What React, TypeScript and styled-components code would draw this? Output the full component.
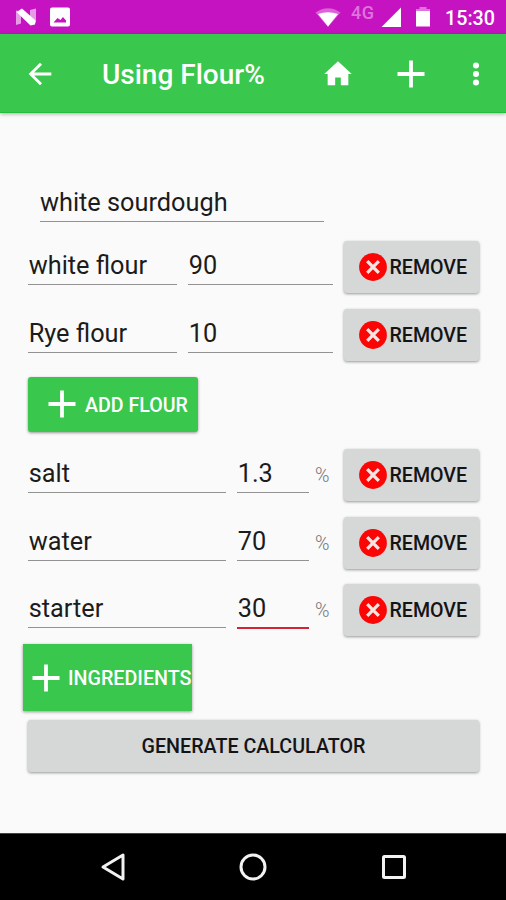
import React from "react";
import styled, { createGlobalStyle } from "styled-components";

const GlobalStyle = createGlobalStyle`
  * { box-sizing: border-box; }
  body { margin: 0; background: #fafafa; }
`;

const Screen = styled.div`
  width: 506px;
  height: 900px;
  display: flex;
  flex-direction: column;
  overflow: hidden;
  background: #fafafa;
  font-family: Roboto, sans-serif;
  color: #1c1c1c;
`;

const StatusBar = styled.div`
  flex: none;
  height: 34px;
  background: #c513c1;
  display: flex;
  align-items: center;
  justify-content: space-between;
  padding: 0 11px 0 15px;
  color: #fff;
`;

const StatusGroup = styled.div<{ $gap: number }>`
  display: flex;
  align-items: center;
  gap: ${(p) => p.$gap}px;
`;

const Network = styled.span`
  font-size: 18px;
  line-height: 18px;
  font-weight: 500;
  color: #df73dc;
  padding-bottom: 9px;
  margin: 0 -2px 0 2px;
  letter-spacing: 0.5px;
  width: 24px;
`;

const Clock = styled.span`
  font-size: 19.7px;
  line-height: 24px;
  font-weight: 500;
  width: 50px;
  padding-top: 3px;
  text-align: right;
  white-space: nowrap;
`;

const AppBar = styled.header`
  flex: none;
  height: 79px;
  background: #3ac74d;
  border-bottom: 1px solid #25bd3e;
  box-shadow: 0 1px 4px rgba(0, 0, 0, 0.32);
  display: flex;
  align-items: center;
  padding: 2px 13px 0 23px;
  color: #fff;
  svg { display: block; flex: none; }
`;

const Title = styled.h1`
  flex: 1;
  margin: 0 0 0 45px;
  font-size: 28px;
  line-height: 34px;
  font-weight: 500;
  padding-top: 2px;
`;

const Actions = styled.div`
  display: flex;
  align-items: center;
`;

const HomeAction = styled.div`
  margin-right: 42px;
`;

const AddAction = styled.div`
  margin-right: 34px;
`;

const Form = styled.main`
  flex: 1;
  display: flex;
  flex-direction: column;
  align-items: flex-start;
  padding: 68px 27px 0 28px;
`;

const Row = styled.div`
  width: 100%;
  height: 67.6px;
  flex: none;
  display: flex;
  align-items: flex-start;
`;

const Field = styled.div<{ $width: number; $gap?: number; $active?: boolean }>`
  flex: none;
  width: ${(p) => p.$width}px;
  margin-right: ${(p) => p.$gap ?? 0}px;
  height: ${(p) => (p.$active ? 53 : 52)}px;
  border-bottom: ${(p) => (p.$active ? "2px solid #d3243c" : "1px solid #929292")};
  padding: 17px 0 0 0.7px;
  font-size: 25.3px;
  line-height: 32px;
  white-space: nowrap;
`;

const NameRow = styled.div`
  flex: none;
  height: 52.4px;
  padding-left: 12px;
`;

const NameField = styled(Field)`
  height: 41px;
  padding: 6px 0 0;
`;

const Unit = styled.span`
  width: 28px;
  flex: none;
  padding-top: 21px;
  font-size: 19.6px;
  line-height: 28px;
  font-weight: 300;
  color: #777;
`;

const Button = styled.button`
  border: 0;
  margin: 0;
  padding: 0;
  flex: none;
  display: flex;
  align-items: center;
  font-family: inherit;
  font-size: 19.7px;
  line-height: 24px;
  font-weight: 500;
  white-space: nowrap;
  border-radius: 3px;
  box-shadow: 0 1px 3px rgba(0, 0, 0, 0.4);
  svg { display: block; flex: none; }
  span { padding-top: 2px; }
`;

const RemoveButton = styled(Button)`
  margin: 8px 0 0 auto;
  width: 135px;
  height: 52px;
  padding-left: 14.5px;
  gap: 3px;
  font-size: 19.6px;
  background: #d6d7d7;
  color: #141414;
`;

const AddFlourButton = styled(Button)`
  width: 170px;
  height: 55px;
  margin: 8px 0 9.7px;
  padding-left: 20px;
  gap: 9px;
  background: #3ac74d;
  color: #fff;
  font-size: 19.6px;
  span { padding-top: 3px; }
`;

const IngredientsButton = styled(Button)`
  width: 169px;
  height: 67px;
  margin: 0 0 9px -5px;
  padding-left: 8.5px;
  gap: 8.5px;
  border-radius: 0;
  background: #3ac74d;
  color: #fff;
  overflow: hidden;
  span { padding-top: 3px; }
`;

const GenerateButton = styled(Button)`
  width: 451px;
  height: 52px;
  justify-content: center;
  background: #d6d7d7;
  color: #141414;
`;

const NavBar = styled.nav`
  flex: none;
  height: 67px;
  border-top: 1px solid #444;
  background: #000;
  display: flex;
  align-items: center;
  justify-content: space-between;
  padding: 0 99px;
`;

const Plus = () => (
  <svg width="28" height="28" viewBox="0 0 28 28">
    <path d="M14 0.5v27M0.5 14h27" stroke="#fff" strokeWidth="3.8" />
  </svg>
);

const Remove = () => (
  <RemoveButton>
    <svg width="28" height="28" viewBox="0 0 28 28">
      <circle cx="14" cy="14" r="13.9" fill="#fb0505" />
      <path d="M8.2 8.2l11.6 11.6M19.800 8.2L8.2 19.800" stroke="#f4e4e2" strokeWidth="3.300" />
    </svg>
    <span>REMOVE</span>
  </RemoveButton>
);

const flours = [
  { name: "white flour", amount: "90" },
  { name: "Rye flour", amount: "10" },
];

const ingredients = [
  { name: "salt", amount: "1.3", active: false },
  { name: "water", amount: "70", active: false },
  { name: "starter", amount: "30", active: true },
];

export default function App() {
  return (
    <Screen>
      <GlobalStyle />
      <StatusBar>
        <StatusGroup $gap={13}>
          <svg width="22" height="18" viewBox="0 0 22 18">
            <path d="M1 2.500l5 1v12l-5 1.500zM15 2l6-1.500v14l-6 1z" fill="#e69be5" />
            <path d="M1.500 4L7 0.500 20.500 12.500 20 16.500 15.500 17.500z" fill="#fff" />
          </svg>
          <svg width="20" height="20" viewBox="0 0 20 20">
            <path
              fillRule="evenodd"
              fill="#fff"
              d="M2 .5h16a2 2 0 0 1 2 2v15a2 2 0 0 1-2 2H2a2 2 0 0 1-2-2v-15a2 2 0 0 1 2-2zM3.500 15.500h12.500v-2l-3-3.500-2.500 3-3-2z"
            />
          </svg>
        </StatusGroup>
        <StatusGroup $gap={8}>
          <svg width="26" height="20" viewBox="0 0 26 20">
            <path d="M0.500 5.500Q13-3 25.500 5.500L13 20z" fill="#dc62d8" />
            <path d="M3 7Q13 3.500 23 7L13 19.500z" fill="#fff" />
          </svg>
          <Network>4G</Network>
          <svg width="20" height="20" viewBox="0 0 20 20">
            <path d="M20 0.500v20H0z" fill="#fff" />
          </svg>
          <svg width="28" height="20" viewBox="0 0 28 20">
            <path d="M10.500 0h7v2h3.500v3H7V2h3.500z" fill="#df73dc" />
            <path d="M7 4h14v15.500H7z" fill="#fff" />
          </svg>
          <Clock>15:30</Clock>
        </StatusGroup>
      </StatusBar>

      <AppBar>
        <svg width="34" height="34" viewBox="0 0 24 24">
          <path d="M20 11H7.830l5.590-5.590L12 4l-8 8 8 8 1.410-1.410L7.830 13H20v-2z" fill="#fff" />
        </svg>
        <Title>Using Flour%</Title>
        <Actions>
          <HomeAction>
            <svg width="34" height="34" viewBox="0 0 24 24">
              <path d="M10 20v-5.500h4V20h5.300v-8h2.400L12 3l-9.700 9h2.400v8z" fill="#fff" />
            </svg>
          </HomeAction>
          <AddAction>
            <Plus />
          </AddAction>
          <svg width="34" height="34" viewBox="0 0 24 24">
            <circle cx="12" cy="6" r="2.150" fill="#fff" />
            <circle cx="12" cy="12" r="2.150" fill="#fff" />
            <circle cx="12" cy="18" r="2.150" fill="#fff" />
          </svg>
        </Actions>
      </AppBar>

      <Form>
        <NameRow>
          <NameField $width={284}>white sourdough</NameField>
        </NameRow>
        {flours.map((f) => (
          <Row key={f.name}>
            <Field $width={149} $gap={11}>{f.name}</Field>
            <Field $width={145}>{f.amount}</Field>
            <Remove />
          </Row>
        ))}
        <AddFlourButton>
          <Plus />
          <span>ADD FLOUR</span>
        </AddFlourButton>
        {ingredients.map((i) => (
          <Row key={i.name}>
            <Field $width={198} $gap={11}>{i.name}</Field>
            <Field $width={72} $gap={6} $active={i.active}>{i.amount}</Field>
            <Unit>%</Unit>
            <Remove />
          </Row>
        ))}
        <IngredientsButton>
          <Plus />
          <span>INGREDIENTS</span>
        </IngredientsButton>
        <GenerateButton>
          <span>GENERATE CALCULATOR</span>
        </GenerateButton>
      </Form>

      <NavBar>
        <svg width="26" height="30" viewBox="0 0 26 30">
          <path d="M24 3v24L4 15z" fill="none" stroke="#f2f2f2" strokeWidth="3" strokeLinejoin="round" />
        </svg>
        <svg width="28" height="28" viewBox="0 0 28 28">
          <circle cx="14" cy="14" r="12" fill="none" stroke="#f2f2f2" strokeWidth="3" />
        </svg>
        <svg width="26" height="26" viewBox="0 0 26 26">
          <rect x="2.500" y="2.500" width="21" height="21" rx="1" fill="none" stroke="#f2f2f2" strokeWidth="3" />
        </svg>
      </NavBar>
    </Screen>
  );
}
